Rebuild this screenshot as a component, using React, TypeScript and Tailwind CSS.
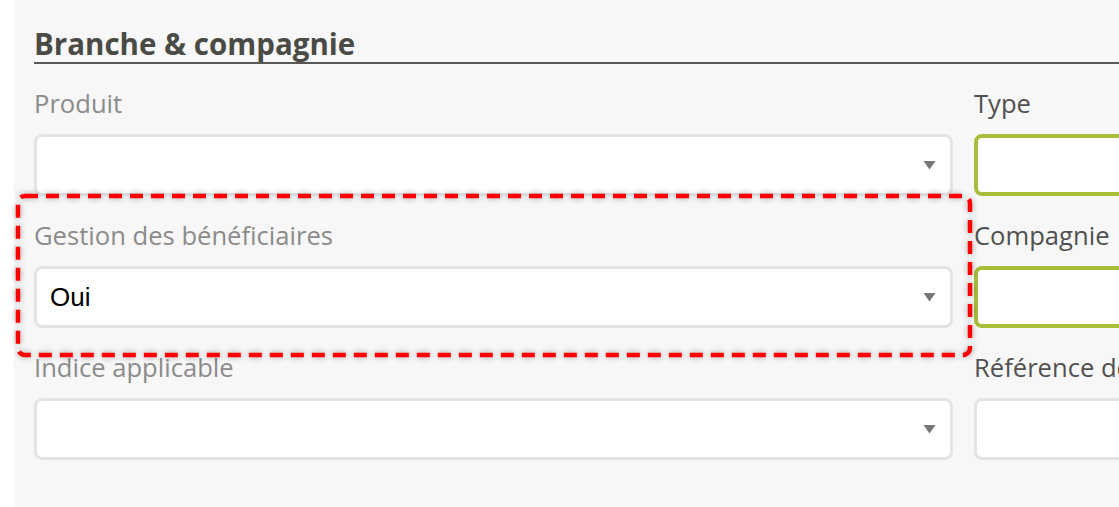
import React from "react";

const Arrow = () => (
  <svg width="13" height="10" viewBox="0 0 13 10" className="absolute right-[14px] top-1/2 -translate-y-1/2">
    <path d="M0.5 1 L12.5 1 L6.5 9.5 Z" fill="#777777" />
  </svg>
);

function Select({ value }: { value?: string }) {
  return (
    <div className="relative flex h-[62px] items-center rounded-[8px] border-[3px] border-[#e3e3e8] bg-white pl-[13px]">
      {value && (
        <span className="text-[26px] text-black" style={{ fontFamily: '"Liberation Sans", Arial, sans-serif' }}>
          {value}
        </span>
      )}
      <Arrow />
    </div>
  );
}

function Field({ label, value, dark, green, select = true }: { label: string; value?: string; dark?: boolean; green?: boolean; select?: boolean }) {
  return (
    <div className="pt-[22px]">
      <div className={`h-[34px] text-[25.6px] leading-[36px] whitespace-nowrap mb-[14px] ${dark ? "text-[#505050]" : "text-[#8b8b8b]"}`}>
        {label}
      </div>
      {select ? (
        <Select value={value} />
      ) : (
        <div
          className={`h-[62px] rounded-[8px] bg-white ${green ? "border-[4px] border-[#a6be3a]" : "border-[3px] border-[#e3e3e8]"}`}
        />
      )}
    </div>
  );
}

export default function App() {
  return (
    <div className="relative h-[507px] w-[1119px] overflow-hidden bg-white" style={{ fontFamily: '"Open Sans", sans-serif' }}>
      <div className="ml-[14px] h-full bg-[#f7f7f7] pl-[20px] pt-[24px]">
        <div className="w-[1900px]">
          <h2 className="h-[40px] border-b-2 border-[#58585a] text-[29.5px] font-bold leading-[40px] text-[#4b4b46]">
            Branche &amp; compagnie
          </h2>
          <div className="grid grid-cols-[919px_919px] gap-x-[21px]">
            <Field label="Produit" />
            <Field label="Type" dark green select={false} />
            <Field label="Gestion des bénéficiaires" value="Oui" />
            <Field label="Compagnie" dark green select={false} />
            <Field label="Indice applicable" />
            <Field label="Référence de l'indice" dark select={false} />
          </div>
        </div>
      </div>
      <svg
        className="absolute left-[14px] top-[192px]"
        width="960"
        height="168"
        style={{ filter: "drop-shadow(0 0 3px rgba(0,0,0,0.35))" }}
      >
        <rect x="4" y="4" width="952" height="159" rx="7" ry="7" fill="none" stroke="#ff0000" strokeWidth="4.5" strokeDasharray="13 8" />
      </svg>
    </div>
  );
}
